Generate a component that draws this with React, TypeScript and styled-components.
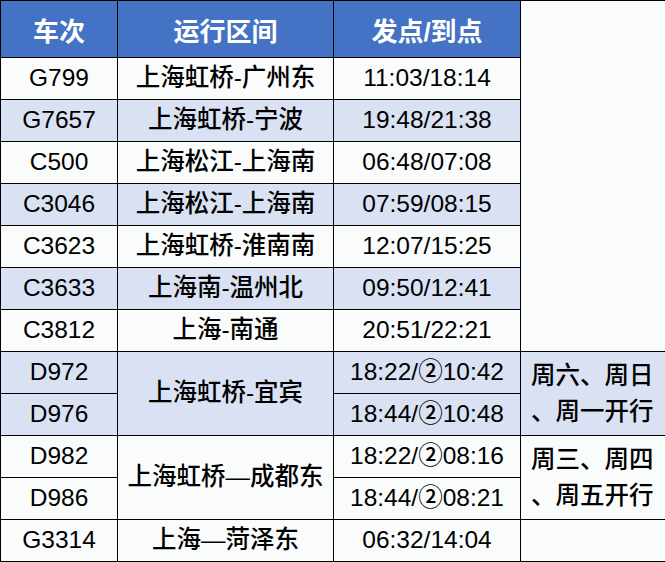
import React, { FC } from "react";
import styled, { createGlobalStyle } from "styled-components";

const headerBlue = "#4472C4";
const rowBlue = "#D9E1F2";
const rowWhite = "#FAFCFC";

interface Train {
  code: string;
  route?: string;
  routeSpan?: number;
  time: string;
  note?: string[];
  noteSpan?: number;
  noteEmpty?: boolean;
  shaded: boolean;
}

const trains: Train[] = [
  { code: "G799", route: "上海虹桥-广州东", time: "11:03/18:14", shaded: false },
  { code: "G7657", route: "上海虹桥-宁波", time: "19:48/21:38", shaded: true },
  { code: "C500", route: "上海松江-上海南", time: "06:48/07:08", shaded: false },
  { code: "C3046", route: "上海松江-上海南", time: "07:59/08:15", shaded: true },
  { code: "C3623", route: "上海虹桥-淮南南", time: "12:07/15:25", shaded: false },
  { code: "C3633", route: "上海南-温州北", time: "09:50/12:41", shaded: true },
  { code: "C3812", route: "上海-南通", time: "20:51/22:21", shaded: false },
  {
    code: "D972",
    route: "上海虹桥-宜宾",
    routeSpan: 2,
    time: "18:22/②10:42",
    note: ["周六、周日", "、周一开行"],
    noteSpan: 2,
    shaded: true,
  },
  { code: "D976", time: "18:44/②10:48", shaded: true },
  {
    code: "D982",
    route: "上海虹桥—成都东",
    routeSpan: 2,
    time: "18:22/②08:16",
    note: ["周三、周四", "、周五开行"],
    noteSpan: 2,
    shaded: false,
  },
  { code: "D986", time: "18:44/②08:21", shaded: false },
  { code: "G3314", route: "上海—菏泽东", time: "06:32/14:04", noteEmpty: true, shaded: false },
];

const App: FC = function () {
  return (
    <>
      <GlobalStyle />
      <Table>
        <colgroup>
          <col style={{ width: 117 }} />
          <col style={{ width: 216 }} />
          <col style={{ width: 187 }} />
          <col style={{ width: 145 }} />
        </colgroup>
        <tbody>
          <HeadRow>
            <HeadCell>车次</HeadCell>
            <HeadCell>运行区间</HeadCell>
            <HeadCell>发点/到点</HeadCell>
            <NoteCell rowSpan={8} $shaded={false} />
          </HeadRow>
          {trains.map((t) => (
            <BodyRow key={t.code}>
              <Cell $shaded={t.shaded}>{t.code}</Cell>
              {t.route && (
                <Cell $shaded={t.shaded} rowSpan={t.routeSpan}>
                  {t.route}
                </Cell>
              )}
              <Cell $shaded={t.shaded}>{t.time}</Cell>
              {t.note && (
                <NoteCell $shaded={t.shaded} rowSpan={t.noteSpan}>
                  {t.note.map((line) => (
                    <NoteLine key={line}>{line}</NoteLine>
                  ))}
                </NoteCell>
              )}
              {t.noteEmpty && <NoteCell $shaded={false} />}
            </BodyRow>
          ))}
        </tbody>
      </Table>
    </>
  );
};

export default App;

const GlobalStyle = createGlobalStyle`
  html, body {
    margin: 0;
    padding: 0;
    background: #ffffff;
  }
  body {
    font-family: "Liberation Sans", "Noto Sans CJK SC", sans-serif;
  }
`;

const Table = styled.table`
  width: 665px;
  table-layout: fixed;
  border-collapse: collapse;
  border-top: 1px solid #000;
  border-left: 1px solid #000;
  border-right: 2px solid #000;
  border-bottom: 2px solid #000;
`;

const HeadRow = styled.tr`
  height: 57px;
`;

const BodyRow = styled.tr`
  height: 42px;
`;

const HeadCell = styled.th`
  background-color: ${headerBlue};
  color: #ffffff;
  font-size: 26px;
  font-weight: 700;
  text-align: center;
  vertical-align: middle;
  border: 1px solid #000;
  padding: 0;
`;

const Cell = styled.td<{ $shaded: boolean }>`
  background-color: ${(p) => (p.$shaded ? rowBlue : rowWhite)};
  color: #000;
  font-size: 24.5px;
  font-weight: 500;
  text-align: center;
  vertical-align: middle;
  border: 1px solid #000;
  padding: 0;
  white-space: nowrap;
  line-height: 1;
`;

const NoteCell = styled.td<{ $shaded: boolean }>`
  background-color: ${(p) => (p.$shaded ? rowBlue : rowWhite)};
  color: #000;
  font-size: 24.5px;
  font-weight: 500;
  text-align: left;
  vertical-align: middle;
  border: 1px solid #000;
  padding: 0 0 0 10px;
  line-height: 36px;
`;

const NoteLine = styled.div`
  white-space: nowrap;
`;
